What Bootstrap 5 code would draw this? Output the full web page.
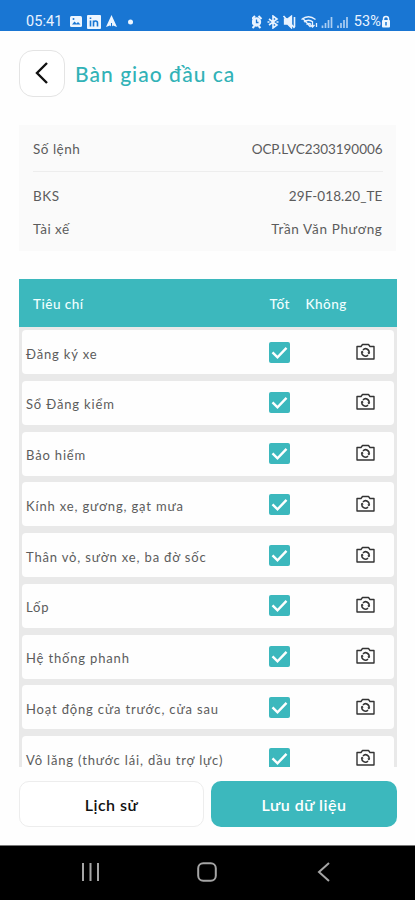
<!DOCTYPE html>
<html lang="vi">
<head>
<meta charset="utf-8">
<meta name="viewport" content="width=device-width, initial-scale=1">
<title>Bàn giao đầu ca</title>
<link href="https://cdn.jsdelivr.net/npm/bootstrap@5.3.0/dist/css/bootstrap.min.css" rel="stylesheet">
<style>
  :root { --teal: #3cb8bd; }
  body { font-family: Lato, "Open Sans", sans-serif; font-size: 13.5px; line-height: 20px; color: #5c5c5c; background: #fefefe; letter-spacing: .5px; }
  svg { display: block; flex: none; }
  .screen { width: 415px; height: 900px; }
  .status { height: 31px; flex: none; background: #1976d3; color: #e9f3ff; padding: 12px 24px 0 26px; font: 14.5px/19px Roboto, sans-serif; letter-spacing: .1px; }
  .status-icons { gap: 4px; margin-left: 6px; }
  .top { height: 94px; flex: none; padding: 19px 19px 0; gap: 10px; }
  .back { width: 46px; height: 47px; border: 1px solid #e4e4e4; border-radius: 14px; background: #fff; }
  .title-box { height: 47px; }
  .title { font-size: 21px; line-height: 24px; font-weight: 500; color: #31b2b7; letter-spacing: 1.03px; margin: 1px 0 0; white-space: nowrap; }
  .info { margin: 0 19px; height: 126px; flex: none; background: #fafafa; padding: 14px 13.5px 0 14px; }
  .info-first { height: 33px; border-bottom: 1px solid #ededed; margin-bottom: 14px; }
  .info-row { height: 33px; }
  .code { letter-spacing: -.05px; }
  .plate { letter-spacing: .1px; }
  .driver { letter-spacing: .65px; }
  .checks { margin: 28px 18.5px 0 19px; height: 488px; flex: none; background: #e9e9e9; }
  .grid-row { display: grid; grid-template-columns: 1fr 36px 91px; }
  .checks-head { height: 48px; background: var(--teal); color: #f1ffff; padding: 1px 0 0 14px; margin-bottom: 3px; font-weight: 500; }
  .check-list { padding: 0 3px; }
  .check-row { height: 44px; margin-bottom: 6.75px; background: #fefefe; border-radius: 4px; padding-left: 4px; grid-template-columns: 1fr 88px 36px; font-size: 13px; letter-spacing: .84px; }
  .check-row > span { padding-top: 3px; white-space: nowrap; }
  .tick { width: 21px; height: 21px; margin-left: -.5px; }
  .cam { margin: -2px 0 0 -1.5px; }
  .actions { padding: 14px 18px 0 19px; gap: 7px; height: 78px; flex: none; }
  .act { height: 46px; border-radius: 10px; font-size: 16px; font-weight: 600; padding: 2px 0 0; letter-spacing: .45px; }
  .act-plain { width: 185px; }
  .act-main { width: 186px; }
  .act-plain, .act-plain:hover { background: #fff; border: 1px solid #ededed; color: #111; }
  .act-main, .act-main:hover { background: var(--teal); border: 0; color: #fff; letter-spacing: .5px; }
  .sysnav { height: 55px; flex: none; background: #000; border-top: 1px solid #777; padding: 0 81px 2px 80px; }
</style>
<script src="https://cdn.jsdelivr.net/npm/bootstrap@5.3.0/dist/js/bootstrap.bundle.min.js"></script>
</head>
<body>
<svg width="0" height="0" class="position-absolute" aria-hidden="true">
  <symbol id="tick" viewBox="0 0 21 21"><rect width="21" height="21" rx="2" fill="#3cb8bd"/><path d="M3.500 10.300l5 5L17.500 5.800" fill="none" stroke="#fff" stroke-width="2.400"/></symbol>
  <symbol id="cam" viewBox="0 0 19 17"><path d="M1 3.500h4l1.500-2h6l1.500 2h4v12.500h-17z" fill="none" stroke="#333" stroke-width="1.400" stroke-linejoin="round"/><path d="M7 6.900a3.500 3.500 0 0 1 5.900 3.500M12 12a3.500 3.500 0 0 1-5.900-3.500" fill="none" stroke="#333" stroke-width="1.500"/><path d="M11.300 9.500h3l-1.500 2zM4.700 9.400h3l-1.500-2z" fill="#333"/></symbol>
</svg>
<div class="screen d-flex flex-column overflow-hidden mx-auto">
  <div class="status d-flex justify-content-between">
    <div class="d-flex align-items-center">
      <span>05:41</span>
      <div class="status-icons d-flex align-items-center">
        <svg width="14" height="13" viewBox="0 0 14 13"><rect x="1" y="1" width="12" height="11" rx="1.500" fill="#eef6ff"/><path d="M3 9.500l2.500-3 2 2L9 7l2.500 2.500z" fill="#1976d3"/><circle cx="4.500" cy="4" r="1" fill="#1976d3"/></svg>
        <svg width="14" height="14" viewBox="0 0 14 14"><rect width="14" height="14" rx="1" fill="#eef6ff"/><path d="M3.500 5.500v6M6.500 11.500v-6M6.500 8q0-2 2-2t2 2v3.500M3.500 2.500v1.500" stroke="#1976d3" stroke-width="1.600" fill="none"/></svg>
        <svg width="13" height="13" viewBox="0 0 13 13"><path d="M6.500 0L12 12 8 10.500 6.500 12 5 10.500 1 12z" fill="#eef6ff"/><path d="M6.500 8v4" stroke="#1976d3"/></svg>
        <svg width="16" height="6" viewBox="0 0 16 6"><circle cx="8.500" cy="3" r="2.500" fill="#eef6ff"/></svg>
      </div>
    </div>
    <div class="d-flex align-items-center">
      <svg width="102" height="14" viewBox="1.500 0 102 14" fill="none" stroke="#e9f3ff" stroke-width="1.300">
        <circle cx="6" cy="7" r="3.700" fill="#e9f3ff" stroke-width="2"/><path d="M1.500 4l3-3M8 1l3 3M2 13l2-2M10 13l-2-2" stroke-width="2"/><path d="M6 4.500v3h2" stroke="#1976d3"/>
        <path d="M18.500 4l8 6-4 3V1l4 3-8 6M17 7h2M26 7h2" stroke-width="1.600"/>
        <path d="M34 4h3l4-3v12l-4-4h-3z" fill="#e9f3ff"/><path d="M33 1l11 12M44 2v10" stroke-width="1.600"/>
        <path d="M51 4.500q7-5.500 14 0M53.500 7q4.500-3.500 9 0M56 9.500q2.500-2 4.500 0M52 3l8 9M62 7v5M60 10l2 2 2-2M66 12V8"/>
        <path d="M72 13V10.500M75 13V8M78 13V5M81 13V2M87.500 13V10.500M90.500 13V8M93.500 13V5M96.500 13V2" stroke-width="1.700" opacity=".7"/>
      </svg>
      <span>53%</span>
      <svg width="10" height="13" viewBox="0 0 10 13"><path d="M2.500 6V4a2.500 2.500 0 0 1 5 0v2" fill="none" stroke="#eef6ff" stroke-width="1.500"/><rect x="1" y="5" width="8" height="7.500" rx="1" fill="#eef6ff"/><path d="M5 7v3.500" stroke="#1976d3" stroke-width="1.500"/></svg>
    </div>
  </div>
  <header class="top d-flex align-items-start">
    <button class="back btn p-0 d-flex align-items-center justify-content-center" aria-label="Quay lại"><svg width="16" height="24" viewBox="1 1 16 24"><path d="M14 2L4 12l10 10" fill="none" stroke="#111" stroke-width="2.400"/></svg></button>
    <div class="title-box d-flex align-items-center"><h1 class="title">Bàn giao đầu ca</h1></div>
  </header>
  <section class="info">
    <div class="info-first d-flex justify-content-between"><span>Số lệnh</span><span class="code">OCP.LVC2303190006</span></div>
    <div class="info-row d-flex justify-content-between"><span>BKS</span><span class="plate">29F-018.20_TE</span></div>
    <div class="info-row d-flex justify-content-between"><span>Tài xế</span><span class="driver">Trần Văn Phương</span></div>
  </section>
  <section class="checks overflow-hidden">
    <div class="checks-head grid-row align-items-center"><span>Tiêu chí</span><span>Tốt</span><span>Không</span></div>
    <div class="check-list">
      <div class="check-row grid-row align-items-center"><span>Đăng ký xe</span><svg class="tick"><use href="#tick"/></svg><svg class="cam" width="19" height="17"><use href="#cam"/></svg></div>
      <div class="check-row grid-row align-items-center"><span>Sổ Đăng kiểm</span><svg class="tick"><use href="#tick"/></svg><svg class="cam" width="19" height="17"><use href="#cam"/></svg></div>
      <div class="check-row grid-row align-items-center"><span>Bảo hiểm</span><svg class="tick"><use href="#tick"/></svg><svg class="cam" width="19" height="17"><use href="#cam"/></svg></div>
      <div class="check-row grid-row align-items-center"><span>Kính xe, gương, gạt mưa</span><svg class="tick"><use href="#tick"/></svg><svg class="cam" width="19" height="17"><use href="#cam"/></svg></div>
      <div class="check-row grid-row align-items-center"><span>Thân vỏ, sườn xe, ba đờ sốc</span><svg class="tick"><use href="#tick"/></svg><svg class="cam" width="19" height="17"><use href="#cam"/></svg></div>
      <div class="check-row grid-row align-items-center"><span>Lốp</span><svg class="tick"><use href="#tick"/></svg><svg class="cam" width="19" height="17"><use href="#cam"/></svg></div>
      <div class="check-row grid-row align-items-center"><span>Hệ thống phanh</span><svg class="tick"><use href="#tick"/></svg><svg class="cam" width="19" height="17"><use href="#cam"/></svg></div>
      <div class="check-row grid-row align-items-center"><span>Hoạt động cửa trước, cửa sau</span><svg class="tick"><use href="#tick"/></svg><svg class="cam" width="19" height="17"><use href="#cam"/></svg></div>
      <div class="check-row grid-row align-items-center"><span>Vô lăng (thước lái, dầu trợ lực)</span><svg class="tick"><use href="#tick"/></svg><svg class="cam" width="19" height="17"><use href="#cam"/></svg></div>
    </div>
  </section>
  <div class="actions d-flex">
    <button class="act act-plain btn">Lịch sử</button>
    <button class="act act-main btn">Lưu dữ liệu</button>
  </div>
  <nav class="sysnav d-flex align-items-center justify-content-between">
    <svg width="20" height="20" viewBox="0 0 20 20"><path d="M3 1v18M10.500 1v18M18 1v18" stroke="#a5a5a5" stroke-width="2"/></svg>
    <svg width="20" height="20" viewBox="0 0 20 20"><rect x="1.200" y="1.200" width="17.600" height="17.600" rx="5" fill="none" stroke="#a5a5a5" stroke-width="2"/></svg>
    <svg width="20" height="20" viewBox="0 0 20 20"><path d="M15 1L5 10l10 9" fill="none" stroke="#a5a5a5" stroke-width="2"/></svg>
  </nav>
</div>
</body>
</html>
